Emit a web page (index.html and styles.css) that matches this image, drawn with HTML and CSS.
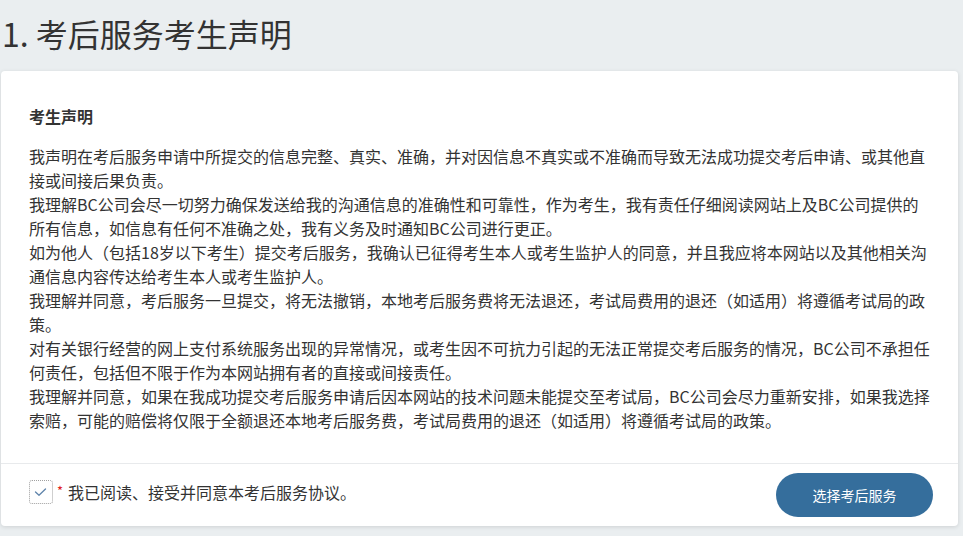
FILE: index.html
```html
<!DOCTYPE html>
<html lang="zh-CN">
<head>
<meta charset="utf-8">
<title>考后服务考生声明</title>
<link rel="stylesheet" href="styles.css">
</head>
<body>
<h1 class="page-title">1. 考后服务考生声明</h1>
<section class="card">
  <div class="card-body">
    <h2 class="section-title">考生声明</h2>
    <div class="statement">
      <p>我声明在考后服务申请中所提交的信息完整、真实、准确，并对因信息不真实或不准确而导致无法成功提交考后申请、或其他直接或间接后果负责。</p>
      <p>我理解BC公司会尽一切努力确保发送给我的沟通信息的准确性和可靠性，作为考生，我有责任仔细阅读网站上及BC公司提供的所有信息，如信息有任何不准确之处，我有义务及时通知BC公司进行更正。</p>
      <p>如为他人（包括18岁以下考生）提交考后服务，我确认已征得考生本人或考生监护人的同意，并且我应将本网站以及其他相关沟通信息内容传达给考生本人或考生监护人。</p>
      <p>我理解并同意，考后服务一旦提交，将无法撤销，本地考后服务费将无法退还，考试局费用的退还（如适用）将遵循考试局的政策。</p>
      <p>对有关银行经营的网上支付系统服务出现的异常情况，或考生因不可抗力引起的无法正常提交考后服务的情况，BC公司不承担任何责任，包括但不限于作为本网站拥有者的直接或间接责任。</p>
      <p>我理解并同意，如果在我成功提交考后服务申请后因本网站的技术问题未能提交至考试局，BC公司会尽力重新安排，如果我选择索赔，可能的赔偿将仅限于全额退还本地考后服务费，考试局费用的退还（如适用）将遵循考试局的政策。</p>
    </div>
  </div>
  <div class="card-footer">
    <label class="agree">
      <span class="checkbox">
        <svg width="24" height="24" viewBox="0 0 24 24"><polyline points="6.5,12 10,15.2 16.5,9" fill="none" stroke="#5f84ab" stroke-width="1.3" stroke-linecap="round" stroke-linejoin="round"/></svg>
      </span>
      <span class="required">*</span>
      <span class="agree-text">我已阅读、接受并同意本考后服务协议。</span>
    </label>
    <button class="primary-btn" type="button">选择考后服务</button>
  </div>
</section>
</body>
</html>
```
FILE: styles.css
```css
html, body {
  margin: 0;
  padding: 0;
}
body {
  background: #eaeef0;
  font-family: "Noto Sans CJK SC", "Noto Sans", sans-serif;
  color: #333;
  width: 963px;
  height: 536px;
  overflow: hidden;
}
.page-title {
  margin: 0;
  padding: 13px 0 18px 2px;
  font-size: 32px;
  line-height: 40px;
  font-weight: 400;
  color: #333;
}
.card {
  margin: 0 0 0 1px;
  width: 957px;
  height: 455px;
  background: #fff;
  border-radius: 4px;
  box-shadow: 0 1px 4px rgba(0, 0, 0, 0.12);
  display: flex;
  flex-direction: column;
}
.card-body {
  padding: 33px 26px 31px 28px;
  border-bottom: 1px solid #e8eaec;
}
.section-title {
  margin: 0 0 16px;
  font-size: 16px;
  line-height: 24px;
  font-weight: 700;
  color: #333;
}
.statement p {
  margin: 0;
  font-size: 16px;
  line-height: 24px;
  color: #333;
}
.card-footer {
  flex: 1;
  display: flex;
  align-items: center;
  justify-content: space-between;
  padding: 0 25px 0 28px;
}
.agree {
  display: flex;
  align-items: center;
  margin-bottom: 6px;
}
.checkbox {
  width: 22px;
  height: 22px;
  border: 1px dotted #a0a0a0;
  border-radius: 3px;
  display: flex;
  align-items: center;
  justify-content: center;
}
.checkbox svg {
  display: block;
  flex: none;
}
.required {
  color: #e02020;
  font-size: 13px;
  line-height: 13px;
  margin: 0 5px 4px 4px;
}
.agree-text {
  font-size: 16px;
  line-height: 24px;
  color: #333;
}
.primary-btn {
  width: 157px;
  height: 44px;
  border: 0;
  border-radius: 22px;
  background: #356e9c;
  color: #fff;
  font-family: "Noto Sans CJK SC", "Noto Sans", sans-serif;
  font-size: 14px;
  padding: 0;
}
```
